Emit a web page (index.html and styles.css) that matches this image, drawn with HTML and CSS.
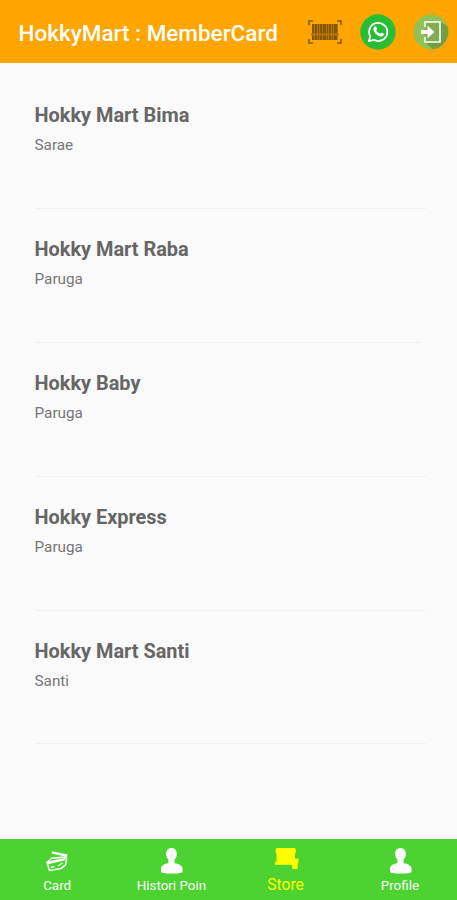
FILE: index.html
```html
<!DOCTYPE html>
<html lang="id">
<head>
<meta charset="utf-8">
<title>HokkyMart : MemberCard</title>
<link rel="stylesheet" href="styles.css">
</head>
<body>
<header class="bar">
  <h1>HokkyMart : MemberCard</h1>
  <svg class="barcode" viewBox="0 0 34 24" width="34" height="24">
    <path d="M1 5V1h4M29 1h4v4M33 19v4h-4M5 23H1v-4" fill="none" stroke="#8a5b0d" stroke-width="1.7"/>
    <path d="M4 4h26v16H4z" fill="#b0740c"/>
    <path d="M4 4h2v16H4zM7 4h2v16H7zM10 4h1v16h-1zM12 4h2v16h-2zM15 4h3v16h-3zM19 4h1v16h-1zM21 4h2v16h-2zM24 4h1v16h-1zM26 4h3v16h-3z" fill="#805209" opacity=".85"/>
    <path d="M3 13.500h28v2H3z" fill="#b87508"/>
  </svg>
  <svg class="whatsapp" viewBox="0 0 36 36" width="36" height="36">
    <circle cx="18" cy="18" r="17.7" fill="#29bd37"/>
    <path d="M8.800 27.200l1.400-5A9.100 9.100 0 1 1 13.700 25.800Z" fill="none" stroke="#fff" stroke-width="1.800" stroke-linejoin="round"/>
    <path d="M14.700 12.500c.5-.5 1.200-.3 1.500.3l.8 1.800c.2.600-.8 1.400-.6 1.800.8 1.500 1.900 2.500 3.500 3.200.5.200 1.200-1.200 1.800-.9l1.900.9c.8.500.1 2-.7 2.500-2.300 1.300-5.600-.7-7.300-2.400-1.800-1.900-3.200-5.100-.9-7.200Z" fill="#fff"/>
  </svg>
  <svg class="exit" viewBox="0 0 36 36" width="36" height="36">
    <circle cx="18" cy="18" r="17.400" fill="#8fc355"/>
    <path d="M27 7.500l7.500 5A17.400 17.400 0 0 1 20 35.200l-8.500-7.200Z" fill="#739f43"/>
    <path d="M12 8h15v20H12z" fill="#82ab52"/>
    <path d="M12 13V8h15v20H12v-5" fill="none" stroke="#fff" stroke-width="1.600"/>
    <path d="M8 16h6.500v-4.200l7 6.200-7 6.200V20H8Z" fill="#fff"/>
  </svg>
</header>
<main class="stores">
  <section class="store"><h2>Hokky Mart Bima</h2><p>Sarae</p></section>
  <section class="store narrow"><h2>Hokky Mart Raba</h2><p>Paruga</p></section>
  <section class="store"><h2>Hokky Baby</h2><p>Paruga</p></section>
  <section class="store"><h2>Hokky Express</h2><p>Paruga</p></section>
  <section class="store"><h2>Hokky Mart Santi</h2><p>Santi</p></section>
</main>
<nav class="tabs">
  <div class="tab">
    <svg viewBox="0 0 26 28" width="26" height="28">
      <path d="M8 4.200l15.500 3.300-.5 2.600-15.500-3.500Z" fill="#fff"/>
      <path d="M3 15.500l4.500-4.200 14-1.200 1.200 1.800-1.200 6-4.500 3.700-11.500 1.800Z" fill="none" stroke="#fff" stroke-width="1.500" stroke-linejoin="round"/>
      <path d="M2.500 14.500l18.500-3.400v2.200L3.200 17.500Z" fill="#fff"/>
      <path d="M7 20.300l3.500-.6M14 19l4.500-3" stroke="#fff" stroke-width="1.300"/>
    </svg>
    <span>Card</span>
  </div>
  <div class="tab">
    <svg class="person" viewBox="0 0 26 28" width="26" height="28"><path d="M13.500 1c3.400 0 5.300 2.300 5.300 6 0 2.500-.8 4.300-2.200 5.800v3.100c3.800 1 8 2.100 8 6.100v2.200c0 2-3.800 2.300-11.100 2.300S3 26.200 3 24.200V22c0-4 3.800-5.100 7.400-6.100v-3.100C9 11.300 8.200 9.500 8.200 7c0-3.700 1.900-6 5.300-6Z" fill="#fff"/></svg>
    <span>Histori Poin</span>
  </div>
  <div class="tab active">
    <svg viewBox="0 0 26 28" width="26" height="28"><path d="M3.500 1H22l1.200 3.500-1.200 2v5h3.500v4l-.8.500v6h-5.500v-3.200l-1-1H2V15.300l1.500-1V6.700L2.300 4.500Z" fill="#ff0"/></svg>
    <span>Store</span>
  </div>
  <div class="tab">
    <svg class="person" viewBox="0 0 26 28" width="26" height="28"><path d="M13.500 1c3.400 0 5.300 2.300 5.300 6 0 2.500-.8 4.300-2.200 5.800v3.100c3.800 1 8 2.100 8 6.100v2.200c0 2-3.800 2.300-11.100 2.300S3 26.200 3 24.200V22c0-4 3.800-5.100 7.400-6.100v-3.100C9 11.300 8.200 9.500 8.200 7c0-3.700 1.900-6 5.300-6Z" fill="#fff"/></svg>
    <span>Profile</span>
  </div>
</nav>
</body>
</html>
```
FILE: styles.css
```css
* { box-sizing: border-box; }
body {
  margin: 0;
  height: 900px;
  display: flex;
  flex-direction: column;
  overflow: hidden;
  background: #fafafa;
  font-family: Roboto, sans-serif;
}
h1, h2, p { margin: 0; }
svg { display: block; flex: none; }
.bar {
  height: 63px;
  flex: none;
  display: flex;
  align-items: center;
  padding: 0 8px 0 18.5px;
  background: #ffa500;
  color: #fff;
}
.bar h1 {
  width: 289px;
  flex: none;
  font-size: 22.5px;
  font-weight: 500;
  line-height: 28px;
  padding-top: 2px;
  white-space: nowrap;
}
.whatsapp { margin-left: 18.5px; }
.exit { margin-left: 17px; }
.stores { flex: 1; padding: 12px 0 0 34.5px; }
.store {
  width: 391.5px;
  height: 133.9px;
  padding-top: 28px;
  border-bottom: 1px solid #f0f0f0;
  color: #666;
}
.narrow { width: 386px; }
.store h2 {
  font-size: 19.9px;
  line-height: 26px;
  font-weight: 700;
}
.store p {
  margin-top: 6px;
  font-size: 15.3px;
  line-height: 20px;
  color: #777;
}
.tabs {
  height: 61px;
  flex: none;
  display: grid;
  grid-template-columns: repeat(4, 1fr);
  background: #4cd331;
  color: #fff;
}
.tab {
  display: flex;
  flex-direction: column;
  align-items: center;
  padding-top: 8px;
  font-size: 13.4px;
  line-height: 18px;
}
.tab span { margin-top: 2px; }
.active { color: #ff0; font-size: 15.6px; }
.active span { margin-top: 1px; }
```
